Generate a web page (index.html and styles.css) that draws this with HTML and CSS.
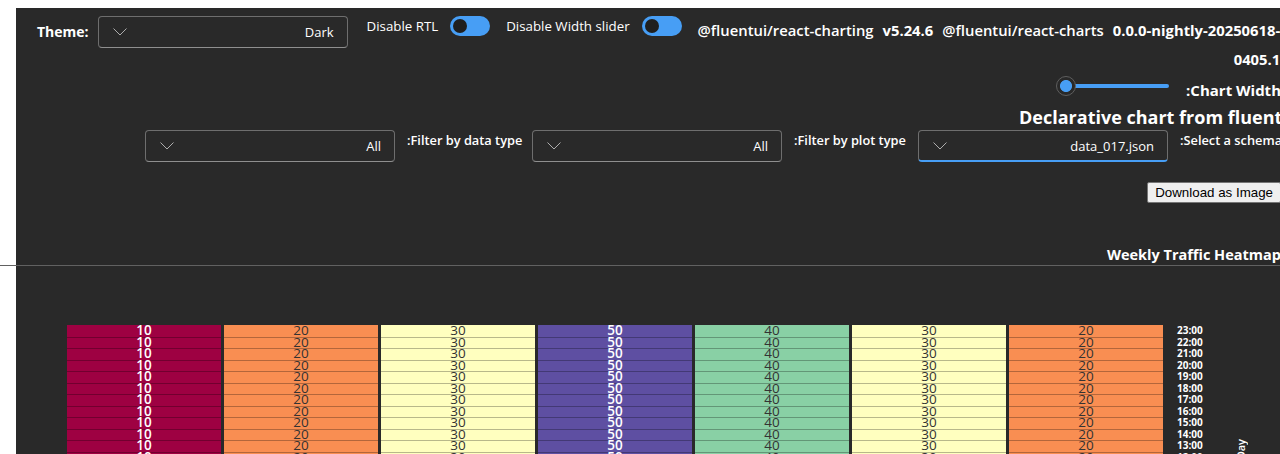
FILE: index.html
```html
<!DOCTYPE html>
<html lang="en">
<head>
<meta charset="utf-8">
<title>Declarative chart</title>
<link rel="stylesheet" href="styles.css">
</head>
<body>
<div class="page">
  <div class="topbar">
    <span class="theme-label">Theme:</span>
    <div class="dropdown theme-dd">
      <svg class="chev" width="14" height="8" viewBox="0 0 14 8"><polyline points="0.5,0.5 7,7 13.5,0.5" fill="none" stroke="#adadad" stroke-width="1"/></svg>
      <span class="dd-value">Dark</span>
    </div>
    <div class="switch-group rtl-switch">
      <span class="switch-label">Disable RTL</span>
      <span class="toggle"><span class="knob"></span></span>
    </div>
    <div class="switch-group width-switch">
      <span class="switch-label">Disable Width slider</span>
      <span class="toggle"><span class="knob"></span></span>
    </div>
    <div class="versions"><span class="pkg">@fluentui/react-charting</span><b class="ver">v5.24.6</b><span class="pkg">@fluentui/react-charts</span><b class="ver last">0.0.0-nightly-20250618-<br>0405.1</b></div>
  </div>

  <div class="slider-row">
    <div class="slider">
      <span class="slider-thumb"></span>
      <span class="slider-track"></span>
    </div>
    <span class="slider-label">:Chart Width</span>
  </div>

  <h2 class="title">Declarative chart from fluent v8</h2>

  <div class="filters">
    <div class="dropdown">
      <svg class="chev" width="14" height="8" viewBox="0 0 14 8"><polyline points="0.5,0.5 7,7 13.5,0.5" fill="none" stroke="#adadad" stroke-width="1"/></svg>
      <span class="dd-value">All</span>
    </div>
    <span class="filter-label fl1">:Filter by data type</span>
    <div class="dropdown">
      <svg class="chev" width="14" height="8" viewBox="0 0 14 8"><polyline points="0.5,0.5 7,7 13.5,0.5" fill="none" stroke="#adadad" stroke-width="1"/></svg>
      <span class="dd-value">All</span>
    </div>
    <span class="filter-label fl2">:Filter by plot type</span>
    <div class="dropdown focused">
      <svg class="chev" width="14" height="8" viewBox="0 0 14 8"><polyline points="0.5,0.5 7,7 13.5,0.5" fill="none" stroke="#adadad" stroke-width="1"/></svg>
      <span class="dd-value">data_017.json</span>
    </div>
    <span class="filter-label fl3">:Select a schema</span>
  </div>

  <div class="actions">
    <button class="download-btn" type="button">Download as Image</button>
  </div>

  <div class="chart-title">Weekly Traffic Heatmap</div>
  <div class="rule"></div>

  <div class="heatmap">
    <div class="cells">
      <div class="c v10">10</div><div class="c v20">20</div><div class="c v30">30</div><div class="c v50">50</div><div class="c v40">40</div><div class="c v30">30</div><div class="c v20">20</div>
      <div class="c v10">10</div><div class="c v20">20</div><div class="c v30">30</div><div class="c v50">50</div><div class="c v40">40</div><div class="c v30">30</div><div class="c v20">20</div>
      <div class="c v10">10</div><div class="c v20">20</div><div class="c v30">30</div><div class="c v50">50</div><div class="c v40">40</div><div class="c v30">30</div><div class="c v20">20</div>
      <div class="c v10">10</div><div class="c v20">20</div><div class="c v30">30</div><div class="c v50">50</div><div class="c v40">40</div><div class="c v30">30</div><div class="c v20">20</div>
      <div class="c v10">10</div><div class="c v20">20</div><div class="c v30">30</div><div class="c v50">50</div><div class="c v40">40</div><div class="c v30">30</div><div class="c v20">20</div>
      <div class="c v10">10</div><div class="c v20">20</div><div class="c v30">30</div><div class="c v50">50</div><div class="c v40">40</div><div class="c v30">30</div><div class="c v20">20</div>
      <div class="c v10">10</div><div class="c v20">20</div><div class="c v30">30</div><div class="c v50">50</div><div class="c v40">40</div><div class="c v30">30</div><div class="c v20">20</div>
      <div class="c v10">10</div><div class="c v20">20</div><div class="c v30">30</div><div class="c v50">50</div><div class="c v40">40</div><div class="c v30">30</div><div class="c v20">20</div>
      <div class="c v10">10</div><div class="c v20">20</div><div class="c v30">30</div><div class="c v50">50</div><div class="c v40">40</div><div class="c v30">30</div><div class="c v20">20</div>
      <div class="c v10">10</div><div class="c v20">20</div><div class="c v30">30</div><div class="c v50">50</div><div class="c v40">40</div><div class="c v30">30</div><div class="c v20">20</div>
      <div class="c v10">10</div><div class="c v20">20</div><div class="c v30">30</div><div class="c v50">50</div><div class="c v40">40</div><div class="c v30">30</div><div class="c v20">20</div>
      <div class="c v10">10</div><div class="c v20">20</div><div class="c v30">30</div><div class="c v50">50</div><div class="c v40">40</div><div class="c v30">30</div><div class="c v20">20</div>
      <div class="c v10">10</div><div class="c v20">20</div><div class="c v30">30</div><div class="c v50">50</div><div class="c v40">40</div><div class="c v30">30</div><div class="c v20">20</div>
      <div class="c v10">10</div><div class="c v20">20</div><div class="c v30">30</div><div class="c v50">50</div><div class="c v40">40</div><div class="c v30">30</div><div class="c v20">20</div>
      <div class="c v10">10</div><div class="c v20">20</div><div class="c v30">30</div><div class="c v50">50</div><div class="c v40">40</div><div class="c v30">30</div><div class="c v20">20</div>
      <div class="c v10">10</div><div class="c v20">20</div><div class="c v30">30</div><div class="c v50">50</div><div class="c v40">40</div><div class="c v30">30</div><div class="c v20">20</div>
      <div class="c v10">10</div><div class="c v20">20</div><div class="c v30">30</div><div class="c v50">50</div><div class="c v40">40</div><div class="c v30">30</div><div class="c v20">20</div>
      <div class="c v10">10</div><div class="c v20">20</div><div class="c v30">30</div><div class="c v50">50</div><div class="c v40">40</div><div class="c v30">30</div><div class="c v20">20</div>
      <div class="c v10">10</div><div class="c v20">20</div><div class="c v30">30</div><div class="c v50">50</div><div class="c v40">40</div><div class="c v30">30</div><div class="c v20">20</div>
      <div class="c v10">10</div><div class="c v20">20</div><div class="c v30">30</div><div class="c v50">50</div><div class="c v40">40</div><div class="c v30">30</div><div class="c v20">20</div>
      <div class="c v10">10</div><div class="c v20">20</div><div class="c v30">30</div><div class="c v50">50</div><div class="c v40">40</div><div class="c v30">30</div><div class="c v20">20</div>
      <div class="c v10">10</div><div class="c v20">20</div><div class="c v30">30</div><div class="c v50">50</div><div class="c v40">40</div><div class="c v30">30</div><div class="c v20">20</div>
      <div class="c v10">10</div><div class="c v20">20</div><div class="c v30">30</div><div class="c v50">50</div><div class="c v40">40</div><div class="c v30">30</div><div class="c v20">20</div>
      <div class="c v10">10</div><div class="c v20">20</div><div class="c v30">30</div><div class="c v50">50</div><div class="c v40">40</div><div class="c v30">30</div><div class="c v20">20</div>
    </div>
    <div class="ylabels">
      <span>23:00</span><span>22:00</span><span>21:00</span><span>20:00</span><span>19:00</span><span>18:00</span>
      <span>17:00</span><span>16:00</span><span>15:00</span><span>14:00</span><span>13:00</span><span>12:00</span>
      <span>11:00</span><span>10:00</span><span>09:00</span><span>08:00</span><span>07:00</span><span>06:00</span>
      <span>05:00</span><span>04:00</span><span>03:00</span><span>02:00</span><span>01:00</span><span>00:00</span>
    </div>
    <div class="ytitle"><span>Day</span></div>
  </div>
</div>
</body>
</html>
```

FILE: styles.css
```css
html, body {
  margin: 0;
  overflow: hidden;
  background: #ffffff;
}

body {
  padding: 8px 0 0 16px;
}

.page {
  width: 1265px;
  min-height: 600px;
  background: #292929;
  color: #ffffff;
  font-family: "Open Sans", "Noto Sans", sans-serif;
  font-size: 13px;
}

/* ---------- top bar ---------- */
.topbar {
  display: flex;
  align-items: flex-start;
  padding: 8px 0 0 21px;
}

.theme-label {
  font-size: 14px;
  font-weight: 700;
  line-height: 32px;
  margin-right: 9px;
}

.dropdown {
  width: 250px;
  height: 32px;
  box-sizing: border-box;
  border: 1px solid #6e6e6e;
  border-bottom-color: #8f8f8f;
  border-radius: 4px;
  background: #292929;
  display: flex;
  align-items: center;
  justify-content: space-between;
  padding: 0 13px 0 14px;
  flex: none;
}

.dropdown.focused {
  border-bottom: 2px solid #479ef5;
  padding-top: 1px;
}

.chev {
  display: block;
}

.dd-value {
  font-size: 13px;
  color: #ffffff;
  line-height: 20px;
}

.theme-dd {
  margin-right: 19px;
}

.switch-group {
  display: flex;
  align-items: center;
  height: 20px;
  gap: 12px;
  margin-right: 16px;
}

.switch-label {
  font-size: 13.3px;
  line-height: 20px;
  white-space: nowrap;
}

.toggle {
  width: 40px;
  height: 20px;
  border-radius: 10px;
  background: #479ef5;
  display: flex;
  align-items: center;
  padding-left: 3px;
  box-sizing: border-box;
}

.knob {
  width: 14px;
  height: 14px;
  border-radius: 50%;
  background: #1f1f1f;
}

.versions {
  flex: none;
  font-size: 14.8px;
  font-weight: 600;
  line-height: 29px;
  text-align: right;
  white-space: nowrap;
}

.pkg, .ver {
  margin-right: 9px;
}

.ver {
  font-weight: 700;
}

.ver.last {
  margin-right: 0;
}

/* ---------- slider ---------- */
.slider-row {
  display: flex;
  justify-content: flex-end;
  align-items: flex-start;
  height: 30px;
}

.slider {
  position: relative;
  width: 113px;
  height: 20px;
  margin-top: 2px;
  display: flex;
  align-items: center;
}

.slider-track {
  margin-left: 10px;
  flex: 1;
  height: 4px;
  border-radius: 2px;
  background: #479ef5;
}

.slider-thumb {
  position: absolute;
  left: 0;
  top: 0;
  width: 20px;
  height: 20px;
  box-sizing: border-box;
  border-radius: 50%;
  border: 1px solid #5e5e5e;
  background: radial-gradient(circle, #479ef5 0, #479ef5 5.6px, #292929 6.4px);
}

.slider-label {
  margin-left: 17px;
  margin-top: 6px;
  font-size: 15px;
  font-weight: 700;
  line-height: 20px;
  white-space: nowrap;
}

/* ---------- title ---------- */
.title {
  margin: 0;
  padding-left: 1003px;
  font-size: 18px;
  font-weight: 700;
  line-height: 26px;
  white-space: nowrap;
}

/* ---------- filters ---------- */
.filters {
  display: flex;
  align-items: flex-start;
  padding-left: 129px;
}

.filter-label {
  font-size: 12.8px;
  font-weight: 600;
  line-height: 20px;
  white-space: nowrap;
  margin: 0 11px 0 12px;
  flex: none;
}

.fl1 { width: 114px; }
.fl2 { width: 113px; }
.fl3 { margin-right: 0; }

/* ---------- actions ---------- */
.actions {
  display: flex;
  justify-content: flex-end;
  margin-top: 20px;
}

.download-btn {
  height: 21px;
  padding: 1px 7px;
  border: 1px solid #767676;
  border-radius: 2px;
  background: #efefef;
  color: #000000;
  font-family: "Liberation Sans", Arial, sans-serif;
  font-size: 13.33px;
  line-height: 15px;
}

/* ---------- chart ---------- */
.chart-title {
  margin-top: 42px;
  text-align: right;
  font-size: 14.5px;
  font-weight: 700;
  line-height: 20px;
  white-space: nowrap;
}

.rule {
  height: 1px;
  width: 1300px;
  margin-left: -16px;
  background: #616161;
}

.heatmap {
  display: flex;
  align-items: flex-start;
  margin-top: 59px;
  padding-left: 51px;
}

.cells {
  display: grid;
  grid-template-columns: repeat(7, 154px);
  grid-auto-rows: 11.5px;
  column-gap: 3px;
}

.c {
  font-size: 13.5px;
  line-height: 11.5px;
  text-align: center;
  color: #333333;
  box-shadow: inset 0 1px 0 rgba(0, 0, 0, 0.28);
}

.c:nth-child(-n+7) {
  box-shadow: none;
}

.v10 { background: #9e0142; color: #ffffff; font-weight: 600; }
.v20 { background: #f98e52; }
.v30 { background: #ffffbf; }
.v40 { background: #89d0a5; }
.v50 { background: #5e4fa2; color: #ffffff; font-weight: 600; }

.ylabels {
  display: grid;
  grid-auto-rows: 11.5px;
  margin-left: 14px;
  font-size: 10px;
  font-weight: 700;
  line-height: 11.5px;
}

.ytitle {
  height: 276px;
  margin-left: 30px;
  display: flex;
  align-items: center;
  padding-bottom: 28px;
  box-sizing: border-box;
}

.ytitle span {
  writing-mode: vertical-rl;
  transform: rotate(180deg);
  font-size: 11px;
  font-weight: 600;
}
```
